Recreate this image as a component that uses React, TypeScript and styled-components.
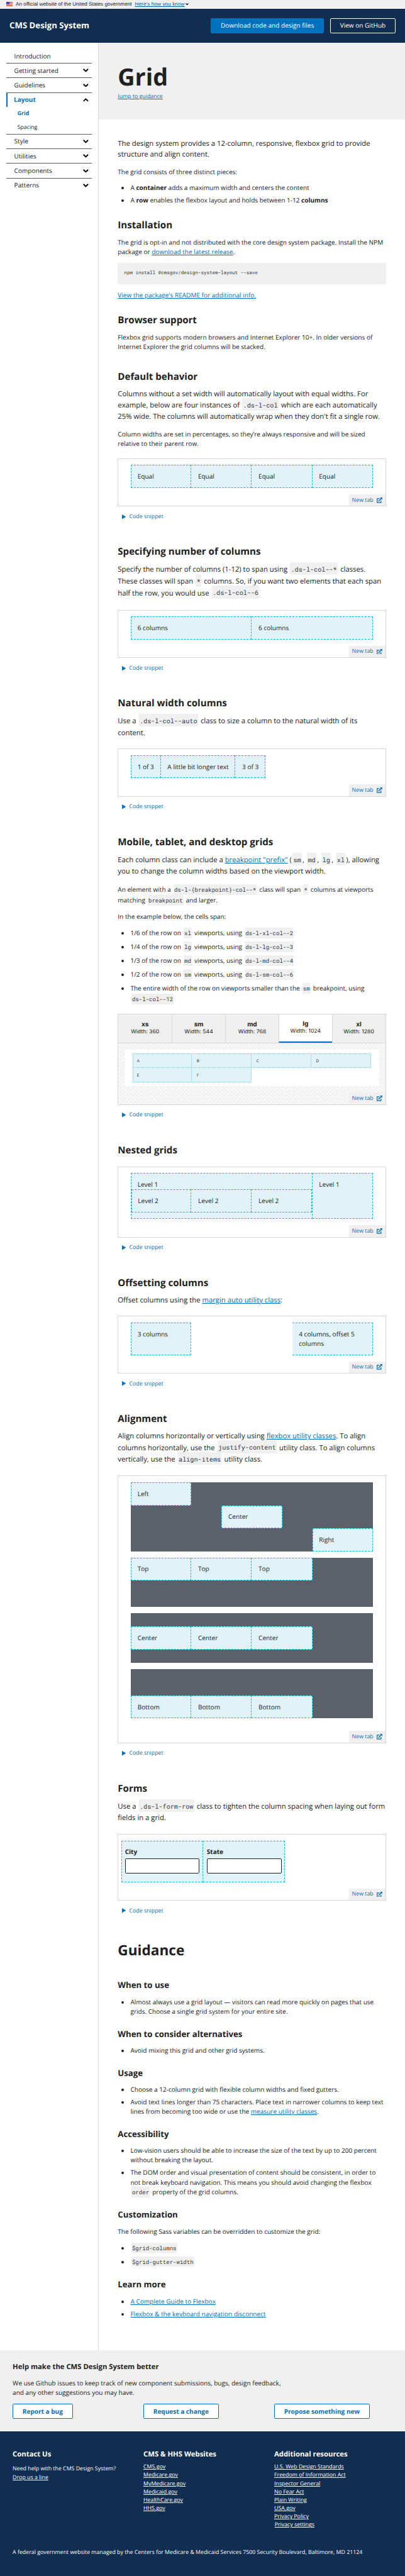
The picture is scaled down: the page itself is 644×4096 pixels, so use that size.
import React from "react";
import styled, { createGlobalStyle, css } from "styled-components";

/* 1rem is ten design units; the whole page scales from the root size. */
const GlobalStyle = createGlobalStyle`
  html { font-size: 6.286px; }
  *, *::before, *::after { box-sizing: border-box; }
  body {
    margin: 0;
    background: #fff;
    color: #212121;
    font-family: "Open Sans", "Noto Sans", sans-serif;
    font-size: 1.6rem;
    line-height: 1.5;
    text-rendering: geometricPrecision;
  }
  h1, h2, h3, h4, p, ul, pre { margin: 0; padding: 0; }
  ul { list-style: none; }
`;

const color = {
  navy: "#112e51",
  blue: "#0071bc",
  gray: "#f0f0f0",
  line: "#d6d7d9",
  cyan: "#00bde3",
  pale: "#e1f3f8",
  slate: "#5b616b",
};

const Page = styled.div`
  display: flex;
  flex-direction: column;
`;

const Banner = styled.div`
  display: flex;
  align-items: center;
  height: 2.2rem;
  padding: 0 1.6rem 0.2rem;
  background: ${color.gray};
  font: 1.3rem/1.8rem "Liberation Sans", Arial, sans-serif;
`;

const BannerText = styled.span`
  margin: 0.2rem 0.8rem 0 0.8rem;
  white-space: nowrap;
`;

const BannerLink = styled.a`
  margin: 0.2rem 0.2rem 0 0;
  color: #005ea2;
  letter-spacing: 0.014rem;
  text-decoration: underline;
  white-space: nowrap;
`;

const Header = styled.header`
  display: flex;
  align-items: center;
  gap: 1.6rem;
  height: 8.6rem;
  padding: 0 2.4rem;
  background: ${color.navy};
  color: #fff;
`;

const Brand = styled.span`
  margin-right: auto;
  font-size: 2.1rem;
  font-weight: 700;
  line-height: 2.8rem;
`;

const HeaderButton = styled.a<{ $primary?: boolean }>`
  display: flex;
  align-items: center;
  height: 3.8rem;
  padding: 0 calc(2.5rem - 1px);
  border: 1px solid ${(p) => (p.$primary ? color.blue : "#fff")};
  border-radius: 0.3rem;
  background: ${(p) => (p.$primary ? color.blue : "transparent")};
  color: #fff;
  white-space: nowrap;
`;

const Body = styled.div`
  display: grid;
  grid-template-columns: 25rem minmax(0, 1fr);
`;

const Sidebar = styled.nav`
  padding: 1.6rem;
  border-right: 1px solid ${color.line};
`;

const NavGroup = styled.div<{ $last?: boolean }>`
  display: flow-root;
  border-bottom: ${(p) => (p.$last ? "none" : `1px solid ${color.slate}`)};
`;

const NavItem = styled.a<{ $active?: boolean }>`
  display: flex;
  align-items: center;
  justify-content: space-between;
  height: calc(3.7rem - 1px);
  padding: 0 0.8rem 0 ${(p) => (p.$active ? "1.6rem" : "2rem")};
  ${(p) =>
    p.$active &&
    css`
      border-left: 0.4rem solid ${color.blue};
      color: ${color.blue};
      font-weight: 700;
    `}
`;

const SubItem = styled.a<{ $active?: boolean }>`
  display: flex;
  align-items: center;
  height: 3.42rem;
  padding-left: 2.8rem;
  font-size: 1.4rem;
  ${(p) => p.$active && `color: ${color.blue}; font-weight: 700;`}
`;

const ChevronIcon = styled.svg<{ $up?: boolean; $w: number }>`
  width: ${(p) => p.$w}rem;
  height: ${(p) => p.$w * 0.643}rem;
  fill: none;
  stroke: #000;
  stroke-width: 3.1;
  transform: ${(p) => (p.$up ? "rotate(180deg)" : "none")};
`;

const FlagIcon = styled.svg`
  width: 1.6rem;
  height: 1.1rem;
`;

const Hero = styled.div`
  height: 19.5rem;
  padding: 4.8rem 4.8rem 0;
  background: ${color.gray};
`;

const Title = styled.h1`
  font-size: 6rem;
  font-weight: 700;
  line-height: 7.8rem;
`;

const HeroLink = styled.a`
  display: block;
  width: max-content;
  color: ${color.blue};
  font-size: 1.4rem;
  text-decoration: underline;
`;

const Content = styled.main`
  padding: 4.8rem 4.85rem 8rem 4.8rem;
`;

const H2 = styled.h2`
  margin-top: 6.6rem;
  margin-bottom: 5.2rem;
  font-size: 3.6rem;
  line-height: 1.3;
`;

const H3 = styled.h3<{ $mt?: number }>`
  margin-top: ${(p) => p.$mt ?? 0}rem;
  margin-bottom: 1.55rem;
  font-size: 2.4rem;
  line-height: 1.3;
`;

const H4 = styled.h4<{ $mt?: number }>`
  margin-top: ${(p) => p.$mt ?? 3.15}rem;
  margin-bottom: 1.6rem;
  font-size: 2.1rem;
  line-height: 1.3;
`;

const P = styled.p<{ $lh?: number }>`
  line-height: ${(p) => p.$lh ?? 2.4}rem;
  & + & {
    margin-top: 1.6rem;
  }
`;

const Lead = styled.p<{ $lh?: number; $mt?: number; $pb?: number }>`
  margin-top: ${(p) => p.$mt ?? 0}rem;
  padding-bottom: ${(p) => p.$pb ?? 0}rem;
  font-size: 1.8rem;
  line-height: ${(p) => p.$lh ?? 2.7}rem;
  & + ${P} {
    margin-top: 1.75rem;
  }
`;

const Code = styled.code`
  margin: 0 0.2rem;
  padding: 0.43em 0.2rem 0.19em;
  background: ${color.gray};
  color: #323a45;
  font-family: "Roboto Mono", "Liberation Mono", monospace;
  font-size: 0.9em;
  line-height: 1;
  white-space: nowrap;
`;

const Pre = styled.pre`
  height: 5.4rem;
  margin: 1.6rem 0;
  padding: 1.8rem 1.6rem;
  background: ${color.gray};
  color: #323a45;
  font: 1.2rem/1.8rem "Roboto Mono", "Liberation Mono", monospace;
`;

const List = styled.ul`
  margin-top: 1.6rem;
  padding-left: 3.2rem;
  list-style: disc;
  ${H4} + & {
    margin-top: 0;
  }
`;

const Li = styled.li<{ $lh?: number }>`
  line-height: ${(p) => p.$lh ?? 2.4}rem;
  & + & {
    margin-top: 0.8rem;
  }
`;

const A = styled.a`
  color: ${color.blue};
  text-decoration: underline;
`;

const ExampleBox = styled.section<{ $inset?: number }>`
  display: flex;
  flex-direction: column;
  gap: 1.6rem;
  margin-top: 2.45rem;
  padding: calc(1.7rem - 1px) calc(${(p) => p.$inset ?? 3.3}rem - 1px) 0;
  border: 1px solid ${color.line};
`;

const Preview = styled(ExampleBox)`
  margin-top: 0;
  border-top: none;
  padding: 1.6rem calc(1.7rem - 1px) 0;
  background: repeating-conic-gradient(#f1f1f1 0 25%, #f9f9f9 0 50%) 0 0 / 1rem 1rem;
`;

const NewTabLink = styled.a<{ $pull: number }>`
  display: flex;
  align-items: center;
  align-self: flex-end;
  gap: 0.8rem;
  height: calc(3.1rem - 1px);
  margin-right: calc(1px - ${(p) => p.$pull}rem);
  padding: 0 0.8rem;
  background: ${color.gray};
  color: ${color.blue};
  font-size: 1.4rem;
`;

const LinkIcon = styled.svg`
  width: 1.4rem;
  height: 1.4rem;
`;

const Snippet = styled.div`
  display: flex;
  align-items: center;
  gap: 0.9rem;
  height: 2.1rem;
  margin: 1.5rem 0 6.4rem;
  padding-left: 1rem;
  color: ${color.blue};
  font-size: 1.4rem;
`;

const TriangleIcon = styled.svg`
  width: 1rem;
  height: 1.2rem;
  fill: ${color.blue};
`;

const Row = styled.div<{ $justify?: string; $align?: string; $tall?: boolean }>`
  display: flex;
  flex-wrap: wrap;
  justify-content: ${(p) => p.$justify ?? "flex-start"};
  align-items: ${(p) => p.$align ?? "stretch"};
  ${(p) => p.$tall && `height: 12.5rem; background: ${color.slate};`}
`;

const Col = styled.div<{ $span?: number; $end?: boolean }>`
  flex: 0 0 auto;
  width: ${(p) => (p.$span ? `${(p.$span / 12) * 100}%` : "auto")};
  min-height: 5.8rem;
  margin-left: ${(p) => (p.$end ? "auto" : "0")};
  padding: calc(1.7rem - 1px);
  border: 1px dashed ${color.cyan};
  background: ${color.pale};
  & + & {
    ${(p) => !p.$end && "border-left-color: transparent;"}
  }
`;

const NestedRow = styled(Row)`
  margin: 0 -1.6rem;
`;

const AlignBlock = styled.div`
  background: ${color.slate};
`;

const AlignStack = styled.div`
  display: flex;
  flex-direction: column;
  gap: 1.6rem;
  margin-bottom: 1.6rem;
`;

const Tabs = styled.div`
  display: grid;
  grid-template-columns: repeat(5, 1fr);
  height: 7.4rem;
  margin-top: 2.45rem;
  border: 1px solid ${color.line};
`;

const Tab = styled.div<{ $active?: boolean }>`
  display: flex;
  flex-direction: column;
  align-items: center;
  justify-content: center;
  background: ${(p) => (p.$active ? "#fff" : color.gray)};
  border-bottom: ${(p) => (p.$active ? `0.4rem solid ${color.blue}` : "none")};
  font: 1.38rem/1.9rem Inter, sans-serif;
  & + & {
    border-left: 1px solid ${color.line};
  }
`;

const TabName = styled.strong`
  font-size: 1.6rem;
`;

const Frame = styled.div`
  display: flex;
  flex-wrap: wrap;
  height: 9.3rem;
  padding: 1rem 2rem;
  background: #fff;
`;

const MiniCol = styled.div`
  width: 25%;
  height: 3.65rem;
  padding: 1.1rem 1rem;
  border: 1px dotted #5fd3ea;
  background: ${color.pale};
  font-size: 1rem;
  line-height: 1.4rem;
  & + & {
    border-left-color: transparent;
  }
  &:nth-child(5) {
    border-left-color: #5fd3ea;
  }
  &:nth-child(n + 5) {
    border-top-color: transparent;
  }
`;

const FieldRow = styled.div`
  display: flex;
`;

const Field = styled.div`
  width: 20.7rem;
  height: 10.5rem;
  padding: calc(1.7rem - 1px) calc(0.9rem - 1px);
  border: 1px dashed ${color.cyan};
  background: ${color.pale};
  & + & {
    border-left-color: transparent;
  }
`;

const FieldLabel = styled.label`
  display: block;
  margin-bottom: 0.4rem;
  font-weight: 700;
`;

const FieldInput = styled.input`
  display: block;
  width: 100%;
  height: 3.9rem;
  padding: 0;
  border: 0.2rem solid #212121;
  border-radius: 0.3rem;
  background: #fff;
`;

const Help = styled.section`
  height: 20.5rem;
  padding: 3.15rem 0 0 3.2rem;
  background: ${color.gray};
`;

const SmallHeading = styled.h4`
  font-size: 1.8rem;
  line-height: 1.3;
`;

const HelpText = styled.p`
  max-width: 71rem;
  margin: 1.65rem 0 1.6rem;
`;

const Thirds = styled.div`
  display: grid;
  grid-template-columns: repeat(3, 1fr);
  align-items: start;
`;

const HelpButton = styled.a`
  display: flex;
  align-items: center;
  width: max-content;
  height: 3.8rem;
  padding: 0 calc(2.5rem - 1px);
  border: 1px solid ${color.blue};
  border-radius: 0.3rem;
  background: #fff;
  color: ${color.blue};
  font-weight: 700;
`;

const Footer = styled.footer`
  height: 36.6rem;
  padding: 4.75rem 0 0 3.2rem;
  background: ${color.navy};
  color: #fff;
  font-size: 1.4rem;
`;

const Contact = styled.p`
  margin-top: 1.4rem;
`;

const FooterLinks = styled.ul`
  margin-top: 0.9rem;
`;

const FooterLink = styled.a`
  text-decoration: underline;
`;

const SettingsLink = styled(FooterLink)`
  margin-left: 0.1rem;
`;

const Legal = styled.p`
  margin-top: 4.8rem;
`;

function Chevron({ up, w = 1.4 }: { up?: boolean; w?: number }) {
  return (
    <ChevronIcon viewBox="0 0 14 9" $up={up} $w={w}>
      <path d="M1.2 1.3 7 7 12.8 1.3" />
    </ChevronIcon>
  );
}

function Flag() {
  return (
    <FlagIcon viewBox="0 0 16 11">
      <path fill="#fff" d="M0 0h16v11H0z" />
      <path
        fill="#db3e1f"
        d="M8 0h8v1H8zM8 2h8v1H8zM8 4h8v1H8zM8 6h8v1H8zM0 8h16v1H0zM0 10h16v1H0z"
      />
      <path fill="#1e33b1" d="M0 0h8v7H0z" />
      <path
        fill="#fff"
        d="M1 1h1v1H1zM3.5 1h1v1h-1zM6 1h1v1H6zM2.2 3h1v1h-1zM4.8 3h1v1h-1zM1 5h1v1H1zM3.5 5h1v1h-1zM6 5h1v1H6z"
      />
    </FlagIcon>
  );
}

function NewTab({ pull = 3.3 }: { pull?: number }) {
  return (
    <NewTabLink $pull={pull}>
      New tab
      <LinkIcon viewBox="0 0 14 14">
        <path d="M7 3H1.1v9.9h9.8V8" fill="none" stroke={color.blue} strokeWidth="2" />
        <path d="M4.6 9.4 11 3" stroke={color.blue} strokeWidth="2.3" />
        <path d="M8 0h6v6z" fill={color.blue} />
      </LinkIcon>
    </NewTabLink>
  );
}

function CodeSnippet() {
  return (
    <Snippet>
      <TriangleIcon viewBox="0 0 10 12">
        <path d="M0 0 10 6 0 12z" />
      </TriangleIcon>
      Code snippet
    </Snippet>
  );
}

function Example({ children }: { children: React.ReactNode }) {
  return (
    <>
      <ExampleBox>
        {children}
        <NewTab />
      </ExampleBox>
      <CodeSnippet />
    </>
  );
}

const spans: [string, string, string][] = [
  ["1/6", "xl", "ds-l-xl-col--2"],
  ["1/4", "lg", "ds-l-lg-col--3"],
  ["1/3", "md", "ds-l-md-col--4"],
  ["1/2", "sm", "ds-l-sm-col--6"],
];

const breakpoints: [string, number][] = [
  ["xs", 360],
  ["sm", 544],
  ["md", 768],
  ["lg", 1024],
  ["xl", 1280],
];

export default function App() {
  return (
    <Page>
      <GlobalStyle />
      <Banner>
        <Flag />
        <BannerText>An official website of the United States government</BannerText>
        <BannerLink>Here’s how you know</BannerLink>
        <Chevron w={0.8} />
      </Banner>
      <Header>
        <Brand>CMS Design System</Brand>
        <HeaderButton $primary>Download code and design files</HeaderButton>
        <HeaderButton>View on GitHub</HeaderButton>
      </Header>

      <Body>
        <Sidebar>
          <NavGroup>
            <NavItem>Introduction</NavItem>
          </NavGroup>
          {["Getting started", "Guidelines"].map((name) => (
            <NavGroup key={name}>
              <NavItem>
                {name}
                <Chevron />
              </NavItem>
            </NavGroup>
          ))}
          <NavGroup>
            <NavItem $active>
              Layout
              <Chevron up />
            </NavItem>
            <SubItem $active>Grid</SubItem>
            <SubItem>Spacing</SubItem>
          </NavGroup>
          {["Style", "Utilities", "Components", "Patterns"].map((name) => (
            <NavGroup key={name} $last={name === "Patterns"}>
              <NavItem>
                {name}
                <Chevron />
              </NavItem>
            </NavGroup>
          ))}
        </Sidebar>

        <div>
          <Hero>
            <Title>Grid</Title>
            <HeroLink>Jump to guidance</HeroLink>
          </Hero>
          <Content>
            <Lead>
              The design system provides a 12-column, responsive, flexbox grid to provide structure
              and align content.
            </Lead>
            <P>The grid consists of three distinct pieces:</P>
            <List>
              <Li>
                A <strong>container</strong> adds a maximum width and centers the content
              </Li>
              <Li>
                A <strong>row</strong> enables the flexbox layout and holds between 1-12{" "}
                <strong>columns</strong>
              </Li>
            </List>

            <H3 $mt={3.6}>Installation</H3>
            <P>
              The grid is opt-in and not distributed with the core design system package. Install
              the NPM package or <A>download the latest release</A>.
            </P>
            <Pre>npm install @cmsgov/design-system-layout --save</Pre>
            <P>
              <A>View the package's README for additional info.</A>
            </P>

            <H3 $mt={3.6}>Browser support</H3>
            <P>
              Flexbox grid supports modern browsers and Internet Explorer 10+. In older versions of
              Internet Explorer the grid columns will be stacked.
            </P>

            <H3 $mt={4.8}>Default behavior</H3>
            <Lead $lh={2.85} $mt={-0.08}>
              Columns without a set width will automatically layout with equal widths. For example,
              below are four instances of <Code>.ds-l-col</Code> which are each automatically 25%
              wide. The columns will automatically wrap when they don't fit a single row.
            </Lead>
            <P>
              Column widths are set in percentages, so they’re always responsive and will be sized
              relative to their parent row.
            </P>
            <Example>
              <Row>
                {[1, 2, 3, 4].map((n) => (
                  <Col key={n} $span={3}>
                    Equal
                  </Col>
                ))}
              </Row>
            </Example>

            <H3>Specifying number of columns</H3>
            <Lead $lh={3} $mt={-0.08} $pb={0.1}>
              Specify the number of columns (1-12) to span using <Code>.ds-l-col--*</Code> classes.
              These classes will span <Code>*</Code> columns. So, if you want two elements that each
              span half the row, you would use <Code>.ds-l-col--6</Code>
            </Lead>
            <Example>
              <Row>
                <Col $span={6}>6 columns</Col>
                <Col $span={6}>6 columns</Col>
              </Row>
            </Example>

            <H3>Natural width columns</H3>
            <Lead $lh={2.9}>
              Use a <Code>.ds-l-col--auto</Code> class to size a column to the natural width of its
              content.
            </Lead>
            <Example>
              <Row>
                <Col>1 of 3</Col>
                <Col>A little bit longer text</Col>
                <Col>3 of 3</Col>
              </Row>
            </Example>

            <H3>Mobile, tablet, and desktop grids</H3>
            <Lead $lh={2.85}>
              Each column class can include a <A>breakpoint "prefix"</A> (<Code>sm</Code>,{" "}
              <Code>md</Code>, <Code>lg</Code>, <Code>xl</Code>), allowing you to change the column
              widths based on the viewport width.
            </Lead>
            <P $lh={2.7}>
              An element with a <Code>{"ds-l-{breakpoint}-col--*"}</Code> class will span{" "}
              <Code>*</Code> columns at viewports matching <Code>breakpoint</Code> and larger.
            </P>
            <P>In the example below, the cells span:</P>
            <List>
              {spans.map(([part, size, name]) => (
                <Li key={size} $lh={2.7}>
                  {part} of the row on <Code>{size}</Code> viewports, using <Code>{name}</Code>
                </Li>
              ))}
              <Li $lh={2.7}>
                The entire width of the row on viewports smaller than the <Code>sm</Code>{" "}
                breakpoint, using <Code>ds-l-col--12</Code>
              </Li>
            </List>
            <Tabs>
              {breakpoints.map(([name, width]) => (
                <Tab key={name} $active={name === "lg"}>
                  <TabName>{name}</TabName>
                  <span>Width: {width}</span>
                </Tab>
              ))}
            </Tabs>
            <Preview>
              <Frame>
                {["A", "B", "C", "D", "E", "F"].map((letter) => (
                  <MiniCol key={letter}>{letter}</MiniCol>
                ))}
              </Frame>
              <NewTab pull={1.7} />
            </Preview>
            <CodeSnippet />

            <H3>Nested grids</H3>
            <Example>
              <Row>
                <Col $span={9}>
                  Level 1
                  <NestedRow>
                    {[1, 2, 3].map((n) => (
                      <Col key={n} $span={4}>
                        Level 2
                      </Col>
                    ))}
                  </NestedRow>
                </Col>
                <Col $span={3}>Level 1</Col>
              </Row>
            </Example>

            <H3>Offsetting columns</H3>
            <Lead>
              Offset columns using the <A>margin auto utility class</A>:
            </Lead>
            <Example>
              <Row>
                <Col $span={3}>3 columns</Col>
                <Col $span={4} $end>
                  4 columns, offset 5 columns
                </Col>
              </Row>
            </Example>

            <H3>Alignment</H3>
            <Lead $lh={2.9} $mt={-0.13} $pb={0.15}>
              Align columns horizontally or vertically using <A>flexbox utility classes</A>. To
              align columns horizontally, use the <Code>justify-content</Code> utility class. To
              align columns vertically, use the <Code>align-items</Code> utility class.
            </Lead>
            <Example>
              <AlignStack>
                <AlignBlock>
                  <Row>
                    <Col $span={3}>Left</Col>
                  </Row>
                  <Row $justify="center">
                    <Col $span={3}>Center</Col>
                  </Row>
                  <Row $justify="flex-end">
                    <Col $span={3}>Right</Col>
                  </Row>
                </AlignBlock>
                {[
                  ["Top", "flex-start"],
                  ["Center", "center"],
                  ["Bottom", "flex-end"],
                ].map(([label, align]) => (
                  <Row key={label} $align={align} $tall>
                    {[1, 2, 3].map((n) => (
                      <Col key={n} $span={3}>
                        {label}
                      </Col>
                    ))}
                  </Row>
                ))}
              </AlignStack>
            </Example>

            <H3>Forms</H3>
            <Lead $lh={2.9}>
              Use a <Code>.ds-l-form-row</Code> class to tighten the column spacing when laying out
              form fields in a grid.
            </Lead>
            <ExampleBox $inset={0.9}>
              <FieldRow>
                <Field>
                  <FieldLabel>City</FieldLabel>
                  <FieldInput />
                </Field>
                <Field>
                  <FieldLabel>State</FieldLabel>
                  <FieldInput />
                </Field>
              </FieldRow>
              <NewTab pull={0.9} />
            </ExampleBox>
            <CodeSnippet />

            <H2>Guidance</H2>

            <H4 $mt={0}>When to use</H4>
            <List>
              <Li>
                Almost always use a grid layout — visitors can read more quickly on pages that use
                grids. Choose a single grid system for your entire site.
              </Li>
            </List>

            <H4>When to consider alternatives</H4>
            <List>
              <Li>Avoid mixing this grid and other grid systems.</Li>
            </List>

            <H4>Usage</H4>
            <List>
              <Li>Choose a 12-column grid with flexible column widths and fixed gutters.</Li>
              <Li>
                Avoid text lines longer than 75 characters. Place text in narrower columns to keep
                text lines from becoming too wide or use the <A>measure utility classes</A>.
              </Li>
            </List>

            <H4>Accessibility</H4>
            <List>
              <Li>
                Low-vision users should be able to increase the size of the text by up to 200
                percent without breaking the layout.
              </Li>
              <Li $lh={2.45}>
                The DOM order and visual presentation of content should be consistent, in order to
                not break keyboard navigation. This means you should avoid changing the flexbox{" "}
                <Code>order</Code> property of the grid columns.
              </Li>
            </List>

            <H4>Customization</H4>
            <P>The following Sass variables can be overridden to customize the grid:</P>
            <List>
              <Li $lh={2.7}>
                <Code>$grid-columns</Code>
              </Li>
              <Li $lh={2.7}>
                <Code>$grid-gutter-width</Code>
              </Li>
            </List>

            <H4>Learn more</H4>
            <List>
              <Li>
                <A>A Complete Guide to Flexbox</A>
              </Li>
              <Li>
                <A>Flexbox &amp; the keyboard navigation disconnect</A>
              </Li>
            </List>
          </Content>
        </div>
      </Body>

      <Help>
        <SmallHeading>Help make the CMS Design System better</SmallHeading>
        <HelpText>
          We use Github issues to keep track of new component submissions, bugs, design feedback,
          and any other suggestions you may have.
        </HelpText>
        <Thirds>
          <HelpButton>Report a bug</HelpButton>
          <HelpButton>Request a change</HelpButton>
          <HelpButton>Propose something new</HelpButton>
        </Thirds>
      </Help>

      <Footer>
        <Thirds>
          <div>
            <SmallHeading>Contact Us</SmallHeading>
            <Contact>
              Need help with the CMS Design System?
              <br />
              <FooterLink>Drop us a line</FooterLink>
            </Contact>
          </div>
          <div>
            <SmallHeading>CMS &amp; HHS Websites</SmallHeading>
            <FooterLinks>
              {[
                "CMS.gov",
                "Medicare.gov",
                "MyMedicare.gov",
                "Medicaid.gov",
                "HealthCare.gov",
                "HHS.gov",
              ].map((name) => (
                <li key={name}>
                  <FooterLink>{name}</FooterLink>
                </li>
              ))}
            </FooterLinks>
          </div>
          <div>
            <SmallHeading>Additional resources</SmallHeading>
            <FooterLinks>
              {[
                "U.S. Web Design Standards",
                "Freedom of Information Act",
                "Inspector General",
                "No Fear Act",
                "Plain Writing",
                "USA.gov",
                "Privacy Policy",
              ].map((name) => (
                <li key={name}>
                  <FooterLink>{name}</FooterLink>
                </li>
              ))}
              <li>
                <SettingsLink>Privacy settings</SettingsLink>
              </li>
            </FooterLinks>
          </div>
        </Thirds>
        <Legal>
          A federal government website managed by the Centers for Medicare &amp; Medicaid Services
          7500 Security Boulevard, Baltimore, MD 21124
        </Legal>
      </Footer>
    </Page>
  );
}
